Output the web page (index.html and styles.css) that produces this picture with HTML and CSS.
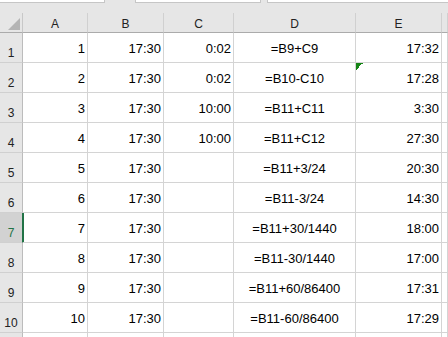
FILE: index.html
```html
<!DOCTYPE html>
<html>
<head>
<meta charset="utf-8">
<link rel="stylesheet" href="styles.css">
</head>
<body>
<div class="sheet">
  <div class="toolbar">
    <div class="box namebox"></div>
    <div class="box mid"></div>
    <div class="box formula"></div>
  </div>
  <div class="grid">
    <div class="corner"><span class="selall"></span></div>
    <div class="colh">A</div>
    <div class="colh">B</div>
    <div class="colh">C</div>
    <div class="colh">D</div>
    <div class="colh">E</div>
    <div class="colh"></div>

    <div class="rowh">1</div><div class="c r">1</div><div class="c r">17:30</div><div class="c r">0:02</div><div class="c m">=B9+C9</div><div class="c r">17:32</div><div class="c"></div>
    <div class="rowh">2</div><div class="c r">2</div><div class="c r">17:30</div><div class="c r">0:02</div><div class="c m">=B10-C10</div><div class="c r flag">17:28</div><div class="c"></div>
    <div class="rowh">3</div><div class="c r">3</div><div class="c r">17:30</div><div class="c r">10:00</div><div class="c m">=B11+C11</div><div class="c r">3:30</div><div class="c"></div>
    <div class="rowh">4</div><div class="c r">4</div><div class="c r">17:30</div><div class="c r">10:00</div><div class="c m">=B11+C12</div><div class="c r">27:30</div><div class="c"></div>
    <div class="rowh">5</div><div class="c r">5</div><div class="c r">17:30</div><div class="c r"></div><div class="c m">=B11+3/24</div><div class="c r">20:30</div><div class="c"></div>
    <div class="rowh">6</div><div class="c r">6</div><div class="c r">17:30</div><div class="c r"></div><div class="c m">=B11-3/24</div><div class="c r">14:30</div><div class="c"></div>
    <div class="rowh sel">7</div><div class="c r seladj">7</div><div class="c r">17:30</div><div class="c r"></div><div class="c m">=B11+30/1440</div><div class="c r">18:00</div><div class="c"></div>
    <div class="rowh">8</div><div class="c r">8</div><div class="c r">17:30</div><div class="c r"></div><div class="c m">=B11-30/1440</div><div class="c r">17:00</div><div class="c"></div>
    <div class="rowh">9</div><div class="c r">9</div><div class="c r">17:30</div><div class="c r"></div><div class="c m">=B11+60/86400</div><div class="c r">17:31</div><div class="c"></div>
    <div class="rowh">10</div><div class="c r">10</div><div class="c r">17:30</div><div class="c r"></div><div class="c m">=B11-60/86400</div><div class="c r">17:29</div><div class="c"></div>
    <div class="rowh"></div><div class="c r"></div><div class="c r"></div><div class="c r"></div><div class="c m"></div><div class="c r"></div><div class="c"></div>
  </div>
</div>
</body>
</html>
```
FILE: styles.css
```css
html, body {
  margin: 0;
  padding: 0;
  background: #ffffff;
  overflow: hidden;
}
.sheet {
  width: 448px;
  height: 337px;
  overflow: hidden;
  font-family: "Liberation Sans", Arial, sans-serif;
  color: #000;
}
.toolbar {
  display: flex;
  height: 13px;
  background: #e6e6e6;
}
.box {
  box-sizing: border-box;
  height: 3px;
  background: #ffffff;
  border-bottom: 1px solid #c6c6c6;
}
.namebox {
  width: 105px;
  border-right: 1px solid #c6c6c6;
}
.mid {
  width: 126px;
  margin-left: 30px;
  border-left: 1px solid #c6c6c6;
  border-right: 1px solid #c6c6c6;
}
.formula {
  flex: 1;
  margin-left: 6px;
  border-left: 1px solid #c6c6c6;
}
.grid {
  display: grid;
  grid-template-columns: 23px 65px 76px 70px 122px 86px 1fr;
  grid-template-rows: 20px repeat(11, 30px);
}
.grid > div {
  box-sizing: border-box;
  display: flex;
}
.corner {
  background: #e6e6e6;
  border-right: 1px solid #c8c8c8;
  border-bottom: 1px solid #ababab;
  justify-content: flex-end;
  align-items: flex-end;
  padding: 0 2px 2px 0;
}
.selall {
  width: 12px;
  height: 12px;
  background: #b4b4b4;
  clip-path: polygon(100% 0, 100% 100%, 0 100%);
}
.colh {
  background: #e6e6e6;
  border-right: 1px solid #d0d0d0;
  border-bottom: 1px solid #ababab;
  justify-content: center;
  align-items: flex-end;
  padding-bottom: 1px;
  font-size: 12px;
  color: #222;
}
.rowh {
  background: #e6e6e6;
  border-right: 1px solid #bcbcbc;
  border-bottom: 1px solid #d0d0d0;
  justify-content: center;
  align-items: flex-end;
  padding-bottom: 2px;
  font-size: 12px;
  color: #222;
}
.rowh.sel {
  background: #d2d2d2;
  color: #217346;
  border-right-color: #217346;
}
.c {
  background: #ffffff;
  border-right: 1px solid #d4d4d4;
  border-bottom: 1px solid #d4d4d4;
  align-items: center;
  padding-top: 2px;
  font-size: 13px;
  white-space: nowrap;
}
.r {
  justify-content: flex-end;
  padding-right: 2px;
}
.m {
  justify-content: center;
}
.seladj {
  box-shadow: inset 1px 0 0 #217346;
}
.flag {
  background: linear-gradient(to bottom right, #168516 50%, transparent 50%) no-repeat 0 0 / 7px 7px, #ffffff;
}
```
